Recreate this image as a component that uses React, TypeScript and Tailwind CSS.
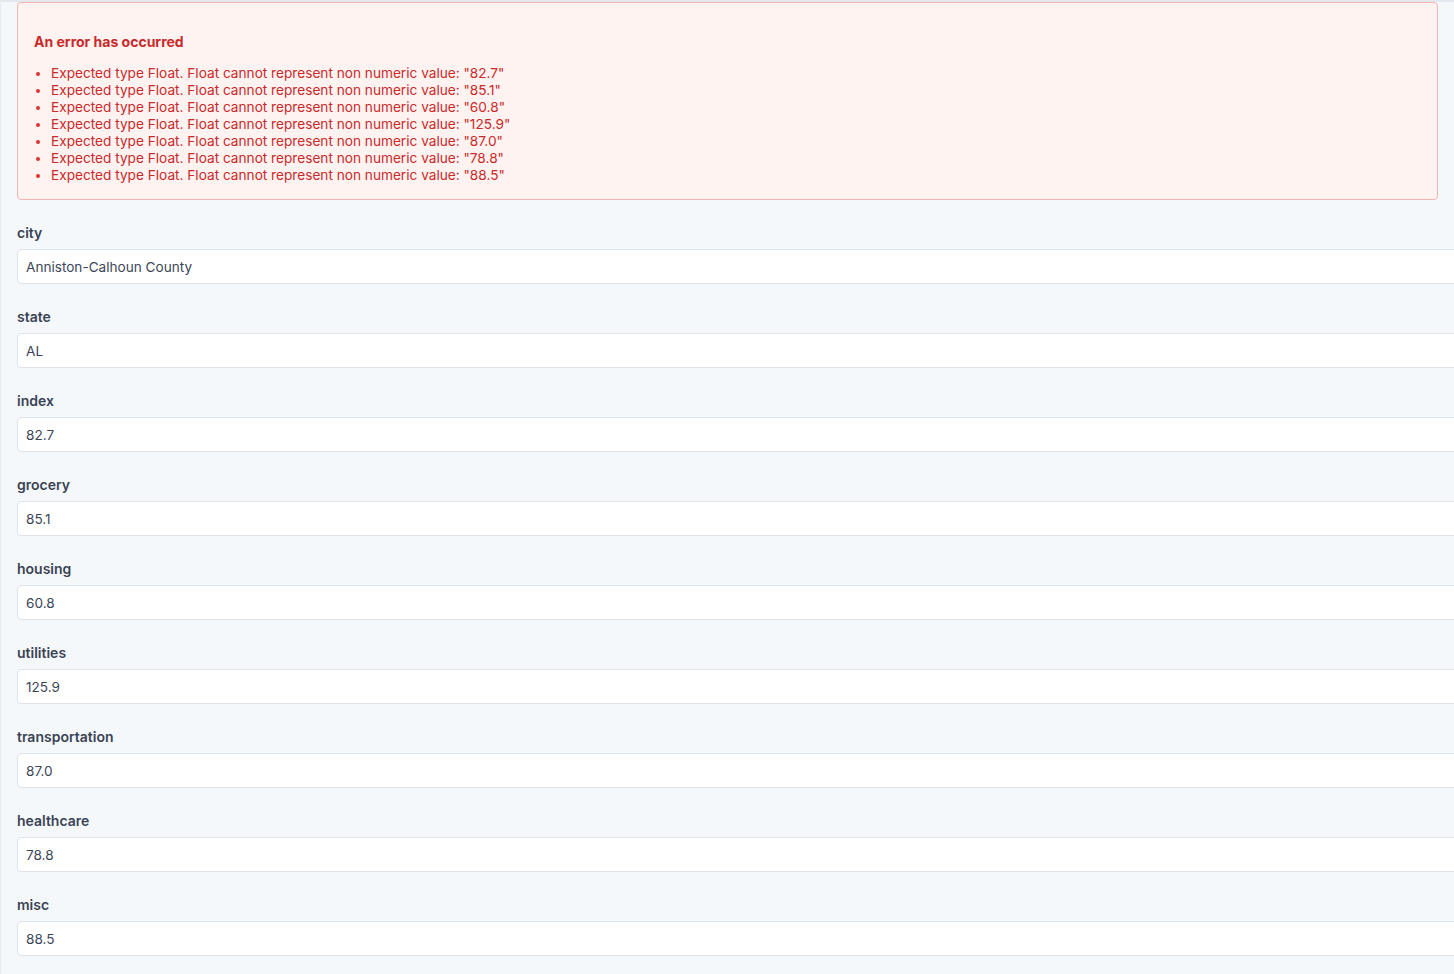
import React from "react";

const values = ["82.7", "85.1", "60.8", "125.9", "87.0", "78.8", "88.5"];

const fields: [string, string][] = [
	["city", "Anniston-Calhoun County"],
	["state", "AL"],
	["index", "82.7"],
	["grocery", "85.1"],
	["housing", "60.8"],
	["utilities", "125.9"],
	["transportation", "87.0"],
	["healthcare", "78.8"],
	["misc", "88.5"],
];

export default function App() {
	return (
		<div
			className="w-[1454px] h-[974px] overflow-hidden bg-[#f5f8fb] border-t-2 border-l border-t-[#e3e8ee] border-l-[#e6ebf1] text-[#3c4658]"
			style={{ fontFamily: "Inter, 'Noto Sans', sans-serif" }}
		>
			<div className="pl-4 pr-4">
				{/* Error box */}
				<div className="w-[1421px] rounded-[4px] border border-[#f6b5b5] bg-[#fff3f2] pl-4 pt-[30px] pb-[15px] text-[#c92a2a]">
					<h3 className="text-[14px] font-bold leading-[18px]">An error has occurred</h3>
					<ul className="mt-[14px] pl-[17px] text-[13.65px] leading-[17px] list-disc marker:text-[#d33]">
						{values.map((v) => (
							<li key={v}>
								Expected type Float. Float cannot represent non numeric value: "{v}"
							</li>
						))}
					</ul>
				</div>

				{/* Form fields */}
				<div className="mt-[24px] flex flex-col gap-[24px]">
					{fields.map(([label, value]) => (
						<div key={label} className="flex flex-col">
							<label className="text-[14px] font-semibold leading-[17px] text-[#3a4454]">{label}</label>
							<div className="mt-[8px] h-[35px] w-[1480px] rounded-[4px] border border-[#dfe4ea] bg-white pl-[8px] pt-[2px] flex items-center text-[13.6px] text-[#3c4658]">
								{value}
							</div>
						</div>
					))}
				</div>
			</div>
		</div>
	);
}
